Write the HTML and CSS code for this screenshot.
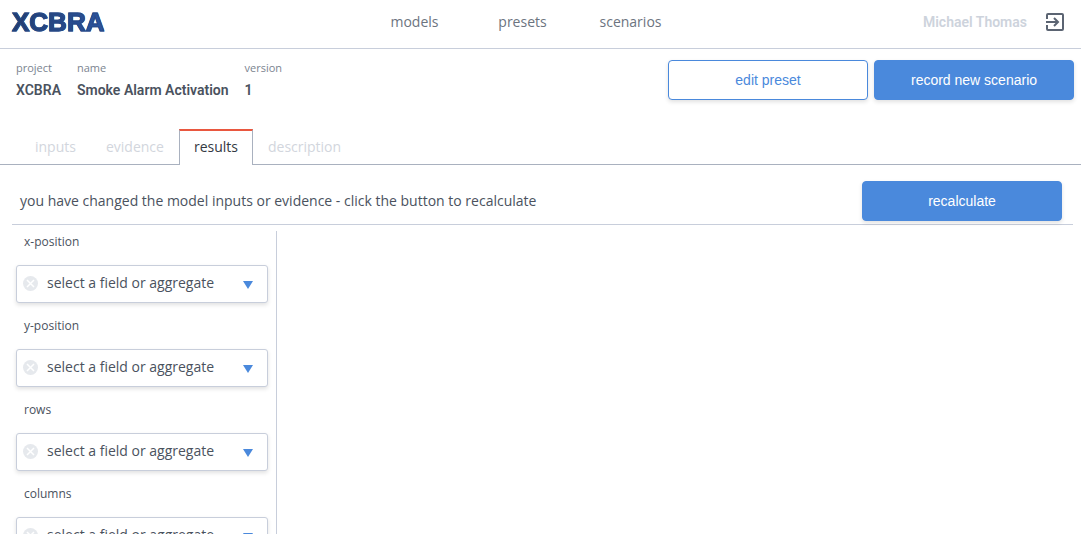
FILE: index.html
```html
<!DOCTYPE html>
<html lang="en">
<head>
<meta charset="utf-8">
<meta name="viewport" content="width=device-width, initial-scale=1">
<title>XCBRA</title>
<link rel="stylesheet" href="styles.css">
</head>
<body>
<header class="topbar">
  <a class="logo" href="#">XCBRA</a>
  <nav class="nav">
    <a href="#">models</a>
    <a href="#">presets</a>
    <a href="#">scenarios</a>
  </nav>
  <div class="user">
    <span class="user-name">Michael Thomas</span>
    <button class="logout" type="button" aria-label="log out">
      <svg width="20" height="20" viewBox="0 0 20 20" fill="none" stroke="currentColor" stroke-width="2">
        <path d="M2 7V3q0-1 1-1h14q1 0 1 1v14q0 1-1 1H3q-1 0-1-1v-4M1 10h12M9 6l4 4-4 4"/>
      </svg>
    </button>
  </div>
</header>
<section class="summary">
  <dl class="facts">
    <div><dt>project</dt><dd>XCBRA</dd></div>
    <div><dt>name</dt><dd>Smoke Alarm Activation</dd></div>
    <div><dt>version</dt><dd>1</dd></div>
  </dl>
  <div class="actions">
    <button class="button outline" type="button">edit preset</button>
    <button class="button" type="button">record new scenario</button>
  </div>
</section>
<nav class="tabs">
  <a class="tab" href="#">inputs</a>
  <a class="tab" href="#">evidence</a>
  <a class="tab active" href="#" aria-current="page">results</a>
  <a class="tab" href="#">description</a>
</nav>
<main class="results">
  <div class="notice">
    <p>you have changed the model inputs or evidence - click the button to recalculate</p>
    <button class="button" type="button">recalculate</button>
  </div>
  <form class="fields">
    <div class="field">
      <label for="x-position">x-position</label>
      <div class="picker">
        <button class="clear" type="button" aria-label="clear x-position"><svg width="15" height="15" viewBox="0 0 15 15"><circle cx="7.5" cy="7.5" r="7.5"/><path d="M4 4l7 7M11 4l-7 7"/></svg></button>
        <select id="x-position"><option>select a field or aggregate</option></select>
        <svg class="arrow" width="10" height="8" viewBox="0 0 10 8"><path d="M0 0h10L5 8z"/></svg>
      </div>
    </div>
    <div class="field">
      <label for="y-position">y-position</label>
      <div class="picker">
        <button class="clear" type="button" aria-label="clear y-position"><svg width="15" height="15" viewBox="0 0 15 15"><circle cx="7.5" cy="7.5" r="7.5"/><path d="M4 4l7 7M11 4l-7 7"/></svg></button>
        <select id="y-position"><option>select a field or aggregate</option></select>
        <svg class="arrow" width="10" height="8" viewBox="0 0 10 8"><path d="M0 0h10L5 8z"/></svg>
      </div>
    </div>
    <div class="field">
      <label for="rows">rows</label>
      <div class="picker">
        <button class="clear" type="button" aria-label="clear rows"><svg width="15" height="15" viewBox="0 0 15 15"><circle cx="7.5" cy="7.5" r="7.5"/><path d="M4 4l7 7M11 4l-7 7"/></svg></button>
        <select id="rows"><option>select a field or aggregate</option></select>
        <svg class="arrow" width="10" height="8" viewBox="0 0 10 8"><path d="M0 0h10L5 8z"/></svg>
      </div>
    </div>
    <div class="field">
      <label for="columns">columns</label>
      <div class="picker">
        <button class="clear" type="button" aria-label="clear columns"><svg width="15" height="15" viewBox="0 0 15 15"><circle cx="7.5" cy="7.5" r="7.5"/><path d="M4 4l7 7M11 4l-7 7"/></svg></button>
        <select id="columns"><option>select a field or aggregate</option></select>
        <svg class="arrow" width="10" height="8" viewBox="0 0 10 8"><path d="M0 0h10L5 8z"/></svg>
      </div>
    </div>
  </form>
</main>
</body>
</html>
```

FILE: styles.css
```css
* { box-sizing: border-box; }

body {
  display: flex;
  flex-direction: column;
  height: 100vh;
  margin: 0;
  overflow: hidden;
  background: #fff;
  color: #4a525e;
  font: 14px/20px "Open Sans", "Liberation Sans", sans-serif;
}

a { color: inherit; text-decoration: none; }
p, dl, dd { margin: 0; }
button, select { font: inherit; cursor: pointer; }

.topbar {
  display: grid;
  grid-template-columns: 1fr 324px 1fr;
  flex: none;
  align-items: center;
  height: 49px;
  padding: 0 16px 4px 12px;
  border-bottom: 1px solid #c8cedb;
}

.logo {
  justify-self: start;
  font: bold 26px/32px "Liberation Sans", sans-serif;
  color: transparent;
  background: linear-gradient(90deg, #213c6d, #2b55a0);
  background-clip: text;
  -webkit-background-clip: text;
  -webkit-text-stroke: 1px #264886;
}

.nav {
  display: grid;
  grid-template-columns: repeat(3, 1fr);
  margin: 0 16px 0 -16px;
  text-align: center;
  color: #6c7480;
}

.user {
  display: flex;
  justify-content: flex-end;
  align-items: center;
  gap: 18px;
}

.user-name,
.facts dd {
  font-family: Roboto, "Liberation Sans", sans-serif;
  font-weight: 600;
}

.user-name { color: #cdd3dc; }

.logout {
  display: flex;
  padding: 0;
  border: 0;
  background: none;
  color: #5b6472;
}

.summary {
  display: flex;
  flex: none;
  justify-content: space-between;
  padding: 10px 7px 0 16px;
}

.facts { display: flex; gap: 16px; }
.facts dt { font-size: 11px; line-height: 18px; color: #7b8490; }
.facts dd { margin-top: 3px; }

.actions { display: flex; gap: 6px; padding-top: 1px; }

.button {
  width: 200px;
  height: 40px;
  padding: 0;
  border: 1px solid #4a89dc;
  border-radius: 4px;
  background: #4a89dc;
  color: #fff;
  font: 14px/20px "Liberation Sans", sans-serif;
  box-shadow: 0 2px 4px rgba(0, 0, 0, 0.12);
}

.button.outline { background: #fff; color: #4a89dc; }

.tabs {
  display: flex;
  flex: none;
  margin-top: 29px;
  padding-left: 20px;
  border-bottom: 1px solid #a9b1bf;
}

.tab {
  height: 35px;
  padding: 5px 14px 0;
  border: 1px solid transparent;
  border-top-width: 2px;
  border-bottom: 0;
  line-height: 22px;
  color: #d2d6dd;
}

.tab.active {
  height: 36px;
  margin-bottom: -1px;
  border-color: #e9573f #a9b1bf;
  background: #fff;
  color: #333942;
}

.results {
  flex: 1;
  min-height: 0;
  padding: 16px 8px 0 12px;
  overflow: hidden;
}

.notice {
  display: flex;
  justify-content: space-between;
  align-items: center;
  padding: 0 11px 3px 8px;
  border-bottom: 1px solid #c8cedb;
}

.fields {
  width: 265px;
  margin-top: 6px;
  padding: 0 8px 0 4px;
  border-right: 1px solid #c8cedb;
}

.field { padding-bottom: 12px; }

.field label {
  display: block;
  padding: 1px 8px 13px;
  font-size: 12px;
}

.picker { position: relative; }

.picker select {
  display: block;
  width: 100%;
  height: 38px;
  padding: 0 32px 2px 30px;
  border: 1px solid #c8cedb;
  border-radius: 3px;
  appearance: none;
  background: #fff;
  color: #4a525e;
  box-shadow: 0 2px 4px rgba(0, 0, 0, 0.12);
}

.clear {
  position: absolute;
  top: 11px;
  left: 7px;
  display: flex;
  padding: 0;
  border: 0;
  background: none;
}

.clear circle { fill: #e6e9ed; }
.clear path { stroke: #fff; stroke-width: 1.5; }

.arrow {
  position: absolute;
  top: 16px;
  right: 15px;
  fill: #4a89dc;
  pointer-events: none;
}
```
